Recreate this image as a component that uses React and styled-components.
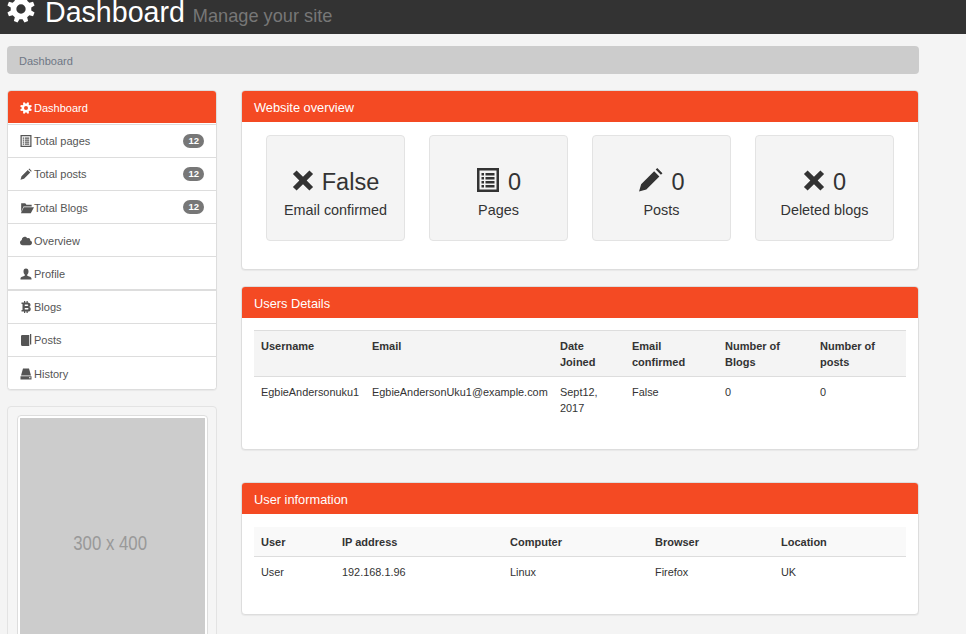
import React from 'react';
import styled, { createGlobalStyle } from 'styled-components';
import { FaCloud } from 'react-icons/fa';

const Global = createGlobalStyle`
  html, body { margin: 0; padding: 0; height: 634px; overflow: hidden; background: #f4f4f4; }
  body { font-family: "Liberation Sans", Arial, sans-serif; font-size: 11px; line-height: 1.43; color: #333; }
  * { box-sizing: border-box; }
`;

const gearPath = (() => {
  const teeth = 8;
  const c = 12;
  const pt = (r, a) => `${(c + r * Math.cos(a)).toFixed(2)} ${(c + r * Math.sin(a)).toFixed(2)}`;
  let d = '';
  for (let i = 0; i < teeth; i++) {
    const a = (i * 2 * Math.PI) / teeth + Math.PI / 8;
    const w = Math.PI / teeth;
    d += `${i === 0 ? 'M' : 'L'}${pt(8.9, a - w * 0.62)} L${pt(12, a - w * 0.36)} L${pt(12, a + w * 0.36)} L${pt(8.9, a + w * 0.62)} `;
  }
  d += 'Z M12 8 A4 4 0 1 0 12 16 A4 4 0 1 0 12 8 Z';
  return d;
})();

const Glyph = ({ size, d }) => (
  <svg width={size} height={size} viewBox="0 0 24 24" fill="currentColor" fillRule="evenodd" aria-hidden="true"><path d={d} /></svg>
);
const CogIcon = ({ size }) => <Glyph size={size} d={gearPath} />;
const XIcon = ({ size }) => <Glyph size={size} d="M5 1.5 12 8.5 19 1.5 23 5.5 16 12.5 23 19.5 19 23.5 12 16.5 5 23.5 1 19.5 8 12.5 1 5.5Z" />;
const ListIcon = ({ size }) => <Glyph size={size} d="M1 0H23V24H1Z M3.5 2.5V21.5H20.5V2.5Z M5.5 5H8V7.5H5.5Z M9.5 5H18.5V7.5H9.5Z M5.5 9H8V11.5H5.5Z M9.5 9H18.5V11.5H9.5Z M5.5 13H8V15.5H5.5Z M9.5 13H18.5V15.5H9.5Z M5.5 17H8V19.5H5.5Z M9.5 17H18.5V19.5H9.5Z" />;
const PencilIcon = ({ size }) => <Glyph size={size} d="M1 23.5 3 16.5 15.5 4 20.5 9 8 21.5Z M17 2.5 18.5 1 23.5 6 22 7.5Z" />;
const FolderIcon = ({ size }) => <Glyph size={size} d="M2 4H9L11 6.5H20V9.5H6L2 19Z M6.5 10.5H24L18.5 21H1.5Z" />;
const UserIcon = ({ size }) => <Glyph size={size} d="M12 1C15.5 1 17 3.5 17 7 17 10 15.7 12 14.5 13V15.5C17.5 16.5 23 17.5 23 21.5V23H1V21.5C1 17.5 6.5 16.5 9.5 15.5V13C8.3 12 7 10 7 7 7 3.500 8.5 1 12 1Z" />;
const BitcoinIcon = ({ size }) => <Glyph size={size} d="M3 3H8V0H10.500V3H13V0H15.500V3C19 3.300 21 5 21 8 21 9.800 20 11 18.500 11.800 20.500 12.500 21.500 14 21.500 16.300 21.500 19.300 19.300 21 15.500 21V24H13V21H10.500V24H8V21H3V18H5V6H3Z M9.500 7V10H15A1.500 1.500 0 0 0 15 7Z M9.500 14V17H15.500A1.500 1.500 0 0 0 15.500 14Z" />;
const BookIcon = ({ size }) => <Glyph size={size} d="M4.500 2H18.500V24H5A3 3 0 0 1 2 21V4.500A2.500 2.500 0 0 1 4.500 2Z M20 0H22.500V21H20Z" />;
const HddIcon = ({ size }) => <Glyph size={size} d="M6 1H18L22 15H2Z M1 16.500H23V23H1Z M18 18.500V20.500H21V18.500Z" />;

const Header = styled.header`
  height: 34px; background: #333; color: #fff; overflow: hidden; padding-left: 7px; display: flex; align-items: flex-start;
`;
const HeaderIcon = styled.span`
  display: block; width: 28px; height: 28px; margin: -5px 10px 0 0; flex: none;
  svg { display: block; }
`;
const Title = styled.h1`
  margin: 0; font-size: 28.6px; font-weight: 400; line-height: 24px; white-space: nowrap;
  small { font-size: 18.2px; color: #777; }
`;
const Page = styled.div`padding: 12px 47px 0 7px;`;
const Crumb = styled.div`
  height: 28px; background: #ccc; border-radius: 4px; padding: 3px 12px 0; display: flex; align-items: center; color: #6f7785; font-size: 11px; margin-bottom: 16px;
`;
const Columns = styled.div`display: flex; gap: 24px; align-items: flex-start;`;
const Side = styled.aside`width: 210px; flex: none;`;
const Main = styled.main`flex: 1; min-width: 0;`;
const Menu = styled.div`
  background: #fff; border: 1px solid #ddd; border-radius: 4px; overflow: hidden; margin-bottom: 16px; box-shadow: 0 1px 1px rgba(0,0,0,.05);
`;
const MenuItem = styled.div`
  height: ${p => p.$h || 33}px; display: flex; align-items: center; padding: ${p => p.$nudge ? 3 : 1}px 12px 0; font-size: 11px; gap: 2px;
  background: ${p => p.$active ? '#f44a23' : '#fff'};
  color: ${p => p.$active ? '#fff' : '#555'};
  border-bottom: ${p => p.$last ? 0 : p.$thick ? 2 : 1}px solid #ddd;
  box-shadow: ${p => p.$active ? 'inset 0 -1px #fff' : 'none'};
`;
const Ic = styled.span`
  width: 12px; height: 12px; display: inline-flex; align-items: center; justify-content: flex-start; flex: none; margin-top: -2px;
  svg { display: block; flex: none; }
`;
const Badge = styled.span`
  margin-left: auto; background: #777; color: #fff; border-radius: 10px; font-size: 9.5px; font-weight: 700; line-height: 14px; height: 14px; padding: 0 5px; position: relative; top: ${p => p.$nudge ? -2 : -1}px;
`;
const Well = styled.div`
  background: #f5f5f5; border: 1px solid #e3e3e3; border-radius: 4px; padding: 8px 8px 8px 9px; height: 400px;
`;
const Thumb = styled.div`
  background: #fff; border: 1px solid #ddd; border-radius: 4px; padding: 2px;
`;
const Placeholder = styled.div`
  height: 250px; background: #ccc; color: #999; font-size: 21px;
  display: flex; align-items: center; justify-content: center;
  span { display: block; transform: scaleX(0.8); white-space: nowrap; margin-right: 4px; }
`;
const Panel = styled.section`
  background: #fff; border: 1px solid #ddd; border-radius: 4px; margin-bottom: ${p => p.$mb || 16}px; box-shadow: 0 1px 1px rgba(0,0,0,.05); overflow: hidden;
  height: ${p => p.$h}px;
`;
const PanelHead = styled.div`
  height: 31px; background: #f44a23; color: #fff; font-size: 12.8px; padding: 4px 12px 0; display: flex; align-items: center;
`;
const Stats = styled.div`
  display: grid; grid-template-columns: repeat(4, 139px); justify-content: space-between; padding: 13px 24px;
`;
const Stat = styled.div`
  height: 106px; background: #f4f4f4; border: 1px solid #e3e3e3; border-radius: 4px; display: flex; flex-direction: column; align-items: center; justify-content: center; padding-top: 7px;
`;
const StatValue = styled.div`
  font-size: 23.5px; line-height: 36px; color: #333; display: flex; align-items: center; gap: 8px;
  svg { display: block; position: relative; top: -2px; }
`;
const StatLabel = styled.div`font-size: 14.4px; line-height: 20px; color: #333;`;
const TableWrap = styled.div`padding: ${p => p.$top}px 12px 0;`;
const Table = styled.table`
  width: 100%; border-collapse: collapse; font-size: 11px; line-height: 16px; table-layout: fixed;
  th { background: ${p => p.$light ? '#f9f9f9' : '#f4f4f4'}; text-align: left; font-weight: 700; vertical-align: top; padding: 7px 7px 6px; border-bottom: 1px solid #ddd; border-top: ${p => p.$light ? 0 : 1}px solid #ddd; color: #333; }
  td { vertical-align: top; padding: 7px; color: #333; font-size: 10.9px; }
`;

const items = [
  { icon: <ListIcon size={12} />, label: 'Total pages', badge: 12 },
  { icon: <PencilIcon size={12} />, label: 'Total posts', badge: 12 },
  { icon: <FolderIcon size={14} />, label: 'Total Blogs', badge: 12, nudge: true },
  { icon: <FaCloud size={12} />, label: 'Overview', nudge: true },
  { icon: <UserIcon size={12} />, label: 'Profile', h: 34, thick: true, nudge: true },
  { icon: <BitcoinIcon size={12} />, label: 'Blogs' },
  { icon: <BookIcon size={12} />, label: 'Posts' },
  { icon: <HddIcon size={12} />, label: 'History', h: 32, last: true, nudge: true },
];

const stats = [
  { icon: <XIcon size={22} />, value: 'False', label: 'Email confirmed' },
  { icon: <ListIcon size={24} />, value: '0', label: 'Pages' },
  { icon: <PencilIcon size={25} />, value: '0', label: 'Posts' },
  { icon: <XIcon size={22} />, value: '0', label: 'Deleted blogs' },
];

export default function App() {
  return (
    <>
      <Global />
      <Header>
        <HeaderIcon><CogIcon size={28} /></HeaderIcon>
        <Title>Dashboard <small>Manage your site</small></Title>
      </Header>
      <Page>
        <Crumb>Dashboard</Crumb>
        <Columns>
          <Side>
            <Menu>
              <MenuItem $active $nudge $h={34}><Ic><CogIcon size={12} /></Ic>Dashboard</MenuItem>
              {items.map(it => (
                <MenuItem key={it.label} $h={it.h} $last={it.last} $thick={it.thick} $nudge={it.nudge}>
                  <Ic>{it.icon}</Ic>{it.label}
                  {it.badge && <Badge $nudge={it.nudge}>{it.badge}</Badge>}
                </MenuItem>
              ))}
            </Menu>
            <Well>
              <Thumb><Placeholder><span>300 x 400</span></Placeholder></Thumb>
            </Well>
          </Side>
          <Main>
            <Panel $h={180}>
              <PanelHead>Website overview</PanelHead>
              <Stats>
                {stats.map(s => (
                  <Stat key={s.label}>
                    <StatValue>{s.icon}{s.value}</StatValue>
                    <StatLabel>{s.label}</StatLabel>
                  </Stat>
                ))}
              </Stats>
            </Panel>
            <Panel $h={164} $mb={32}>
              <PanelHead>Users Details</PanelHead>
              <TableWrap $top={12}>
                <Table>
                  <colgroup><col style={{width:111}}/><col style={{width:188}}/><col style={{width:72}}/><col style={{width:93}}/><col style={{width:95}}/><col /></colgroup>
                  <thead><tr><th>Username</th><th>Email</th><th>Date Joined</th><th>Email confirmed</th><th>Number of Blogs</th><th>Number of posts</th></tr></thead>
                  <tbody><tr><td>EgbieAndersonuku1</td><td>EgbieAndersonUku1@example.com</td><td>Sept12, 2017</td><td>False</td><td>0</td><td>0</td></tr></tbody>
                </Table>
              </TableWrap>
            </Panel>
            <Panel $h={133}>
              <PanelHead>User information</PanelHead>
              <TableWrap $top={13}>
                <Table $light>
                  <colgroup><col style={{width:81}}/><col style={{width:168}}/><col style={{width:145}}/><col style={{width:126}}/><col /></colgroup>
                  <thead><tr><th>User</th><th>IP address</th><th>Computer</th><th>Browser</th><th>Location</th></tr></thead>
                  <tbody><tr><td>User</td><td>192.168.1.96</td><td>Linux</td><td>Firefox</td><td>UK</td></tr></tbody>
                </Table>
              </TableWrap>
            </Panel>
          </Main>
        </Columns>
      </Page>
    </>
  );
}
